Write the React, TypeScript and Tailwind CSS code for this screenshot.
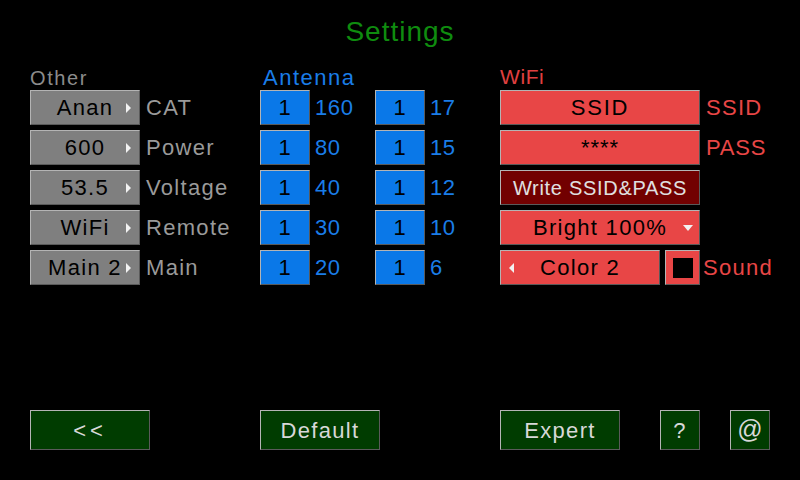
import React from "react";

const bevel =
  "border border-t-[#b4b4b4] border-l-[#b4b4b4] border-r-[#5a5a5a] border-b-[#5a5a5a]";

function Arrow({ dir }: { dir: "right" | "down" | "left" }) {
  if (dir === "right")
    return (
      <svg width="5" height="10" viewBox="0 0 5 10" className="absolute right-[8px] top-1/2 -translate-y-1/2">
        <path d="M0 0 L5 5 L0 10 Z" fill="#f2f2f2" />
      </svg>
    );
  if (dir === "left")
    return (
      <svg width="5" height="10" viewBox="0 0 5 10" className="absolute left-[8px] top-1/2 -translate-y-1/2">
        <path d="M5 0 L0 5 L5 10 Z" fill="#f2f2f2" />
      </svg>
    );
  return (
    <svg width="10" height="6" viewBox="0 0 10 6" className="absolute right-[6px] top-1/2 -translate-y-1/2">
      <path d="M0 0 L10 0 L5 6 Z" fill="#f2f2f2" />
    </svg>
  );
}

export default function App() {
  const other = [
    { value: "Anan", label: "CAT" },
    { value: "600", label: "Power" },
    { value: "53.5", label: "Voltage" },
    { value: "WiFi", label: "Remote" },
    { value: "Main 2", label: "Main" },
  ];
  const antA = ["160", "80", "40", "30", "20"];
  const antB = ["17", "15", "12", "10", "6"];

  return (
    <div
      className="w-[800px] h-[480px] bg-black flex flex-col overflow-hidden"
      style={{ fontFamily: '"Liberation Sans", Arial, sans-serif' }}
    >
      <div className="h-[64px] flex items-center justify-center">
        <h1 className="text-[28px] leading-none tracking-[1px] text-[#0f8c0f]">Settings</h1>
      </div>

      <div className="flex pl-[30px] text-[22px] tracking-[1.3px]">
        {/* Other */}
        <div className="w-[230px] flex flex-col">
          <div className="h-[26px] pt-[3px] text-[20px] leading-[22px] tracking-[1.6px] text-[#8c8c8c]">Other</div>
          <div className="flex flex-col gap-[5px]">
            {other.map((o) => (
              <div key={o.label} className="flex items-center h-[35px]">
                <div
                  className={`relative w-[110px] h-[35px] bg-[#7f7f7f] ${bevel} flex items-center justify-center text-black`}
                >
                  <span>{o.value}</span>
                  <Arrow dir="right" />
                </div>
                <span className="ml-[6px] text-[#9a9a9a]">{o.label}</span>
              </div>
            ))}
          </div>
        </div>

        {/* Antenna */}
        <div className="w-[240px] flex flex-col">
          <div className="h-[26px] pt-[3px] text-[22px] leading-[22px] tracking-[1.5px] text-[#1a7de8] pl-[3px]">Antenna</div>
          <div className="flex flex-col gap-[5px]">
            {antA.map((a, i) => (
              <div key={a} className="flex items-center h-[35px] tracking-[0.6px]">
                <div className="w-[115px] flex items-center">
                  <div
                    className={`w-[50px] h-[35px] bg-[#0a78e8] ${bevel} flex items-center justify-center text-black`}
                  >
                    1
                  </div>
                  <span className="ml-[5px] text-[#1a7de8]">{a}</span>
                </div>
                <div
                  className={`w-[50px] h-[35px] bg-[#0a78e8] ${bevel} flex items-center justify-center text-black`}
                >
                  1
                </div>
                <span className="ml-[5px] text-[#1a7de8]">{antB[i]}</span>
              </div>
            ))}
          </div>
        </div>

        {/* WiFi */}
        <div className="flex-1 flex flex-col">
          <div className="h-[26px] pt-[2px] text-[21px] leading-[22px] tracking-[0.6px] text-[#e04040]">WiFi</div>
          <div className="flex flex-col gap-[5px]">
            <div className="flex items-center h-[35px]">
              <div
                className={`w-[200px] h-[35px] bg-[#e84646] ${bevel} flex items-center justify-center text-black tracking-[1.8px]`}
              >
                SSID
              </div>
              <span className="ml-[6px] text-[#e84646]">SSID</span>
            </div>
            <div className="flex items-center h-[35px]">
              <div
                className={`w-[200px] h-[35px] bg-[#e84646] ${bevel} flex items-center justify-center text-black tracking-[1px]`}
              >
                ****
              </div>
              <span className="ml-[6px] text-[#e84646] tracking-[0.8px]">PASS</span>
            </div>
            <div className="flex items-center h-[35px]">
              <div
                className={`w-[200px] h-[35px] bg-[#720000] ${bevel} flex items-center justify-center text-[20px] tracking-[0.7px] text-[#e0e0e0]`}
              >
                Write SSID&amp;PASS
              </div>
            </div>
            <div className="flex items-center h-[35px]">
              <div
                className={`relative w-[200px] h-[35px] bg-[#e84646] ${bevel} flex items-center justify-center text-black`}
              >
                <span>Bright 100%</span>
                <Arrow dir="down" />
              </div>
            </div>
            <div className="flex items-center h-[35px]">
              <div
                className={`relative w-[160px] h-[35px] bg-[#e84646] ${bevel} flex items-center justify-center text-black`}
              >
                <span>Color 2</span>
                <Arrow dir="left" />
              </div>
              <div
                className={`ml-[5px] w-[35px] h-[35px] bg-[#e84646] ${bevel} flex items-center justify-center`}
              >
                <div className="w-[20px] h-[20px] bg-black" />
              </div>
              <span className="ml-[3px] text-[#e84646]">Sound</span>
            </div>
          </div>
        </div>
      </div>

      {/* bottom buttons */}
      <div className="mt-auto mb-[30px] flex pl-[30px] text-[22px] tracking-[1.3px] text-[#d8d8d8]">
        <div className={`w-[120px] h-[40px] bg-[#003c00] ${bevel} flex items-center justify-center tracking-[4px]`}>
          &lt;&lt;
        </div>
        <div className={`ml-[110px] w-[120px] h-[40px] bg-[#003c00] ${bevel} flex items-center justify-center`}>
          Default
        </div>
        <div className={`ml-[120px] w-[120px] h-[40px] bg-[#003c00] ${bevel} flex items-center justify-center`}>
          Expert
        </div>
        <div className={`ml-[40px] w-[40px] h-[40px] bg-[#003c00] ${bevel} flex items-center justify-center`}>
          ?
        </div>
        <div className={`ml-[30px] w-[40px] h-[40px] bg-[#003c00] ${bevel} flex items-center justify-center text-[25px] tracking-normal`}>
          @
        </div>
      </div>
    </div>
  );
}
